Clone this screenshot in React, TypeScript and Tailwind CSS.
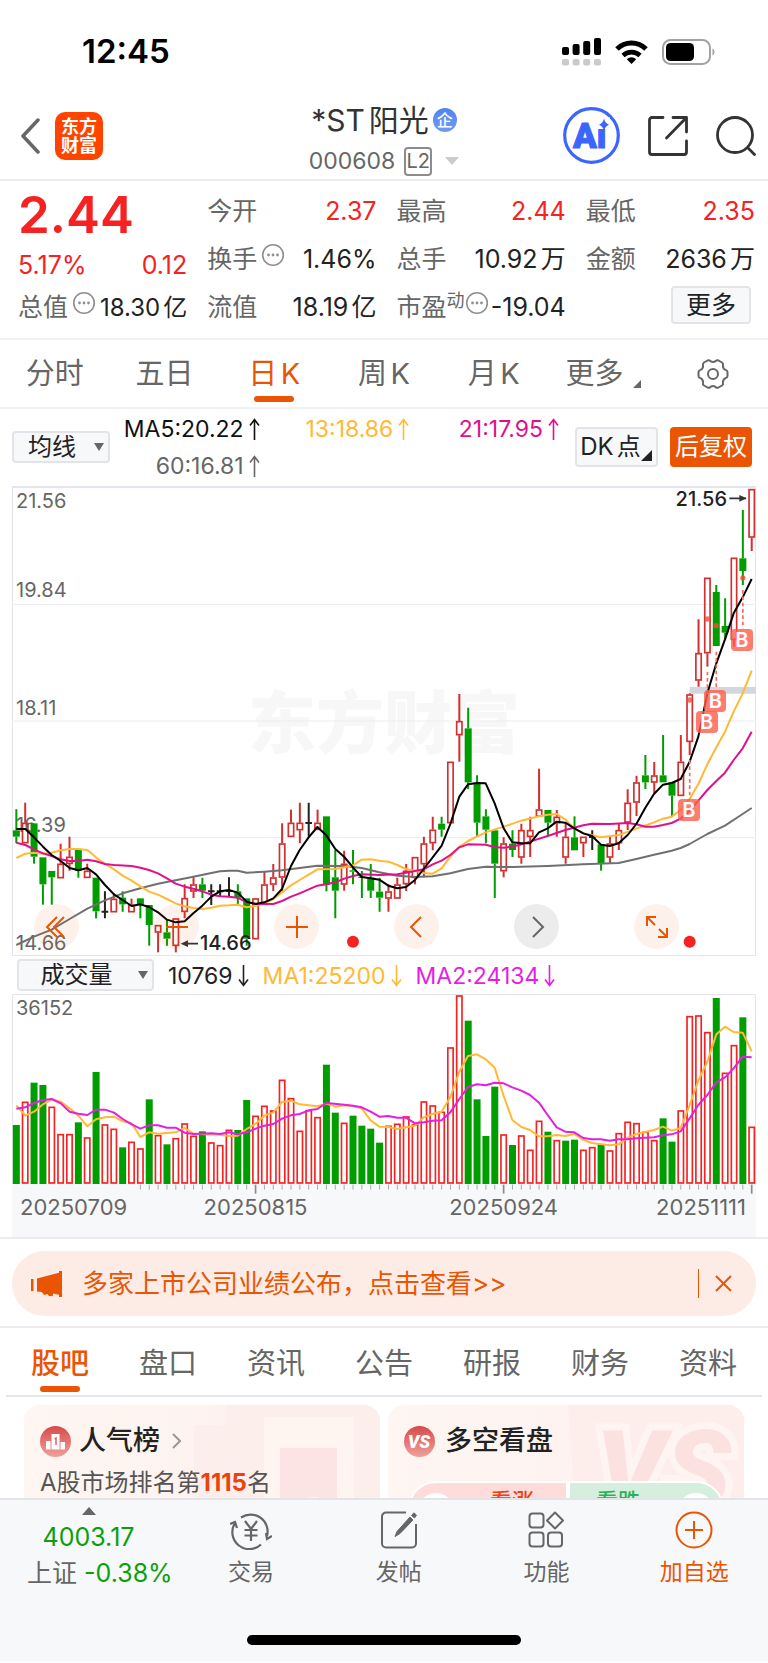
import React, { useState } from 'react';
import clsx from 'clsx';

type Kind = 'up' | 'down' | 'flat';

// kind, high, body top, body bottom, low (chart units, y grows downwards)
type Candle = [Kind, number, number, number, number];

const CHART_LEFT = 36;
const CHART_WIDTH = 2232;
const FIRST_X = 49;
const STEP = 26.58;

const xAt = (index: number) => FIRST_X + index * STEP;
const leftPercent = (x: number) => `${((x - CHART_LEFT) / CHART_WIDTH) * 100}%`;

const COLORS: Record<Kind, string> = {
  up: '#d22f2f',
  down: '#009d00',
  flat: '#222222'
};

const candles: Candle[] = [
  ['down', 988, 1051, 1070, 1089],
  ['up', 968, 1028, 1090, 1090],
  ['down', 1030, 1030, 1130, 1151],
  ['down', 1132, 1132, 1213, 1274],
  ['down', 1173, 1173, 1192, 1274],
  ['up', 1091, 1151, 1195, 1195],
  ['up', 1070, 1130, 1152, 1172],
  ['down', 1110, 1110, 1172, 1193],
  ['up', 1151, 1172, 1194, 1194],
  ['down', 1193, 1193, 1294, 1315],
  ['flat', 1234, 1295, 1295, 1315],
  ['up', 1240, 1256, 1297, 1297],
  ['down', 1234, 1253, 1273, 1295],
  ['up', 1256, 1274, 1297, 1297],
  ['down', 1255, 1255, 1275, 1315],
  ['down', 1275, 1275, 1335, 1397],
  ['up', 1335, 1335, 1358, 1417],
  ['down', 1320, 1357, 1376, 1397],
  ['up', 1315, 1315, 1398, 1417],
  ['up', 1213, 1254, 1296, 1315],
  ['up', 1192, 1213, 1235, 1254],
  ['down', 1193, 1213, 1232, 1254],
  ['flat', 1213, 1234, 1234, 1275],
  ['flat', 1213, 1234, 1234, 1250],
  ['flat', 1192, 1233, 1233, 1250],
  ['down', 1213, 1234, 1253, 1273],
  ['down', 1255, 1255, 1376, 1397],
  ['up', 1255, 1255, 1378, 1378],
  ['up', 1174, 1213, 1275, 1275],
  ['up', 1152, 1192, 1214, 1233],
  ['up', 1030, 1090, 1193, 1233],
  ['up', 989, 1028, 1071, 1071],
  ['up', 968, 1028, 1051, 1090],
  ['flat', 968, 1029, 1029, 1070],
  ['up', 989, 1028, 1050, 1050],
  ['down', 1009, 1009, 1214, 1234],
  ['down', 1110, 1192, 1232, 1315],
  ['up', 1112, 1151, 1214, 1232],
  ['down', 1110, 1171, 1175, 1213],
  ['down', 1173, 1190, 1194, 1254],
  ['down', 1152, 1193, 1232, 1254],
  ['down', 1193, 1235, 1253, 1295],
  ['up', 1213, 1234, 1256, 1295],
  ['up', 1193, 1213, 1256, 1256],
  ['up', 1152, 1172, 1213, 1233],
  ['up', 1131, 1131, 1194, 1213],
  ['up', 1070, 1090, 1153, 1192],
  ['up', 1010, 1049, 1090, 1111],
  ['down', 1010, 1031, 1049, 1070],
  ['up', 845, 845, 1030, 1030],
  ['up', 642, 723, 766, 845],
  ['down', 683, 745, 907, 927],
  ['down', 886, 908, 1028, 1070],
  ['down', 988, 1009, 1049, 1090],
  ['down', 1051, 1051, 1151, 1254],
  ['up', 1072, 1090, 1174, 1192],
  ['down', 1051, 1091, 1110, 1131],
  ['up', 1031, 1050, 1133, 1151],
  ['up', 1010, 1050, 1071, 1131],
  ['up', 866, 988, 1010, 1010],
  ['down', 990, 990, 1028, 1068],
  ['up', 990, 1010, 1030, 1070],
  ['up', 1030, 1070, 1133, 1151],
  ['down', 1009, 1072, 1111, 1111],
  ['up', 1070, 1070, 1090, 1131],
  ['flat', 1051, 1071, 1071, 1110],
  ['down', 1093, 1093, 1151, 1172],
  ['up', 1070, 1090, 1133, 1151],
  ['up', 1031, 1050, 1090, 1110],
  ['up', 928, 968, 1028, 1050],
  ['up', 887, 907, 968, 1008],
  ['down', 825, 886, 907, 927],
  ['up', 846, 886, 908, 940],
  ['down', 765, 886, 907, 907],
  ['down', 907, 907, 947, 1008],
  ['up', 765, 845, 948, 948],
  ['up', 640, 643, 786, 825],
  ['up', 418, 519, 602, 620],
  ['up', 293, 293, 520, 560],
  ['down', 315, 336, 498, 498],
  ['down', 355, 438, 458, 480],
  ['up', 233, 233, 480, 500],
  ['down', 90, 235, 273, 315],
  ['up', 27, 27, 173, 213]
];

const priceLines = [
  {
    color: '#707070',
    points:
      '49,1395 102,1370 155,1349 209,1317 262,1286 315,1261 368,1240 421,1225 474,1211 527,1201 580,1190 634,1179 660,1174 687,1172 713,1172 740,1178 793,1175 846,1171 899,1164 952,1157 1033,1158 1085,1164 1138,1177 1192,1187 1245,1191 1298,1189 1351,1180 1404,1167 1457,1160 1537,1161 1643,1158 1750,1153 1856,1149 1909,1137 1962,1124 2015,1112 2042,1104 2069,1092 2122,1062 2175,1037 2228,1002 2255,984'
  },
  {
    color: '#ffb933',
    points:
      '49,1134 76,1121 102,1118 129,1121 155,1118 182,1111 209,1107 235,1107 262,1110 288,1132 315,1152 342,1168 368,1187 395,1202 421,1219 447,1235 474,1244 501,1257 527,1270 554,1279 580,1284 607,1287 634,1283 660,1277 687,1276 713,1274 740,1282 767,1278 793,1270 820,1257 846,1237 873,1216 899,1200 926,1184 952,1168 1006,1167 1033,1162 1059,1156 1085,1139 1112,1138 1138,1142 1165,1145 1192,1155 1218,1167 1245,1172 1271,1179 1298,1181 1325,1165 1351,1130 1378,1100 1404,1083 1457,1057 1511,1040 1564,1022 1617,1009 1643,1004 1670,1002 1696,1018 1723,1045 1750,1060 1803,1072 1856,1065 1909,1046 1962,1027 1989,1016 2015,1010 2042,990 2069,957 2095,912 2122,853 2149,802 2175,755 2201,695 2228,640 2255,572'
  },
  {
    color: '#e0108c',
    points:
      '49,1088 76,1095 102,1108 129,1120 155,1128 182,1138 209,1143 235,1143 262,1139 288,1144 315,1152 342,1155 395,1158 421,1163 447,1170 474,1180 501,1195 527,1211 554,1220 580,1226 607,1234 634,1244 660,1249 687,1250 713,1253 740,1267 767,1271 820,1272 846,1263 873,1250 899,1240 952,1217 979,1213 1006,1207 1033,1196 1059,1188 1085,1183 1138,1185 1192,1183 1218,1178 1271,1168 1298,1153 1325,1142 1351,1125 1378,1102 1404,1093 1457,1094 1484,1101 1511,1103 1537,1100 1564,1093 1590,1085 1643,1068 1696,1050 1750,1036 1776,1031 1829,1032 1883,1029 1909,1033 1936,1040 1962,1040 1989,1035 2015,1029 2042,1016 2069,992 2095,962 2122,930 2149,903 2175,878 2201,840 2228,805 2255,755'
  },
  {
    color: '#000000',
    points:
      '49,1047 76,1047 102,1072 129,1100 155,1125 182,1143 209,1164 235,1171 262,1164 288,1183 315,1215 342,1243 368,1260 395,1278 421,1273 447,1281 474,1297 501,1319 527,1327 554,1324 580,1300 607,1277 634,1250 660,1234 687,1230 713,1238 740,1265 767,1272 793,1267 820,1255 846,1227 873,1158 899,1110 926,1072 952,1041 979,1066 1006,1107 1033,1131 1059,1162 1085,1191 1112,1195 1138,1199 1165,1217 1192,1225 1218,1221 1245,1200 1271,1167 1298,1132 1325,1097 1351,1032 1378,950 1404,913 1431,909 1457,910 1484,970 1511,1045 1537,1087 1564,1090 1590,1090 1617,1057 1643,1045 1670,1025 1696,1028 1723,1045 1750,1060 1776,1068 1803,1094 1829,1098 1856,1090 1883,1065 1909,1032 1936,983 1962,942 1989,914 2015,909 2042,897 2069,845 2095,770 2122,640 2149,550 2175,478 2201,400 2228,352 2255,297'
  }
];

// top of each volume bar, baseline at 611
const volumeTops = [
  435, 365, 308, 315, 380, 462, 462, 427, 472, 276, 433, 446, 502, 485, 505, 358, 465, 493, 474, 430, 467,
  454, 487, 495, 449, 450, 360, 407, 377, 391, 299, 354, 452, 390, 411, 254, 398, 428, 407, 437, 446, 488,
  437, 431, 409, 433, 364, 376, 395, 202, 46, 122, 358, 468, 320, 463, 495, 466, 509, 422, 455, 480, 482,
  479, 509, 501, 492, 511, 459, 425, 429, 455, 480, 415, 485, 391, 108, 106, 156, 54, 278, 195, 112, 440
];

const volumeDown = new Set([
  0, 2, 3, 7, 9, 12, 15, 17, 21, 25, 26, 35, 36, 38, 39, 40, 41, 51, 52, 53, 54, 56, 60, 62, 63, 66, 73, 74,
  79, 82
]);

const volumeLines = [
  {
    color: '#ffb933',
    points:
      '49,376 76,407 102,395 129,373 155,358 182,365 209,385 235,407 262,439 288,418 315,412 342,410 368,424 395,430 421,471 447,457 474,461 527,457 554,444 580,461 660,464 687,468 713,467 740,447 767,431 793,407 820,397 846,366 873,362 899,373 952,379 979,371 1006,380 1033,376 1059,378 1085,385 1112,421 1138,440 1165,441 1192,447 1218,442 1245,437 1271,412 1298,402 1325,395 1351,351 1378,275 1404,228 1431,223 1457,238 1484,263 1511,348 1537,420 1564,441 1590,450 1617,469 1643,469 1670,465 1696,468 1723,462 1750,480 1776,489 1829,496 1856,493 1883,473 1909,462 1962,450 1989,440 2015,452 2042,444 2069,375 2095,302 2122,245 2149,163 2175,140 2201,156 2228,158 2255,214'
  },
  {
    color: '#e51ee5',
    points:
      '49,386 76,382 102,369 129,360 155,357 182,370 209,395 235,401 262,405 288,389 315,389 342,398 368,417 395,433 421,446 447,436 474,436 501,443 527,443 554,458 580,462 634,460 660,462 687,457 713,463 740,457 767,446 793,437 820,432 846,416 873,406 899,402 926,391 952,387 979,369 1033,374 1059,377 1085,382 1112,395 1138,410 1165,408 1192,413 1218,413 1245,430 1271,427 1298,422 1325,421 1351,397 1378,357 1404,321 1431,313 1457,316 1484,308 1511,310 1537,322 1564,332 1590,345 1617,368 1643,405 1670,442 1696,455 1723,457 1750,474 1776,478 1803,478 1829,482 1856,478 1883,478 1909,475 1962,472 1989,466 2015,463 2042,454 2069,415 2095,375 2122,345 2149,307 2175,292 2201,265 2228,230 2255,232'
  }
];

const priceLabels = [
  { text: '21.56', className: 'top-px' },
  { text: '19.84', className: 'top-[90px]' },
  { text: '18.11', className: 'top-[208px]' },
  { text: '16.39', className: 'top-[325px]' },
  { text: '14.66', className: 'top-[443px]' }
];

const buyMarks = [
  { index: 76, dot: 660, from: 840, to: 955, className: 'top-[311px]' },
  { index: 78, dot: 417, from: 575, to: 660, className: 'top-[223px]' },
  { index: 79, dot: 437, from: 515, to: 625, className: 'top-[202px]' },
  { index: 82, dot: 294, from: 330, to: 445, className: 'top-[141px]' }
];

const periods = ['分时', '五日', '日K', '周K', '月K', '更多'];
const sections = ['股吧', '盘口', '资讯', '公告', '研报', '财务', '资料'];

const InfoDot = () => (
  <svg className="mb-[10px] ml-1 h-6 w-6 shrink-0" viewBox="0 0 24 24" fill="none" aria-hidden="true">
    <circle cx="12" cy="12" r="10.300" stroke="#8f8f8f" strokeWidth="1.600" />
    <circle cx="7.500" cy="12" r="1.400" fill="#8f8f8f" />
    <circle cx="12" cy="12" r="1.400" fill="#8f8f8f" />
    <circle cx="16.500" cy="12" r="1.400" fill="#8f8f8f" />
  </svg>
);

const Arrow: React.FC<{ up?: boolean }> = ({ up }) => (
  <svg
    className="ml-[5px] inline-block h-[22px] w-[11px] align-[-3px]"
    viewBox="0 0 11 22"
    fill="none"
    stroke="currentColor"
    strokeWidth="1.600"
    aria-hidden="true"
  >
    <path d={up ? 'M5.500 22V1.500M1 7.500l4.500-6 4.500 6' : 'M5.500 0v20.500M1 14.500l4.500 6 4.500-6'} />
  </svg>
);

interface StatProps {
  label: string;
  value: string;
  red?: boolean;
  info?: boolean;
  sup?: string;
}

const Stat: React.FC<StatProps> = ({ label, value, red, info, sup }) => (
  <div className="flex h-12 items-center whitespace-nowrap">
    <span className="text-[#666]">{label}</span>
    {sup && <span className="-mr-1 mb-4 text-[18px] text-[#666]">{sup}</span>}
    {info && <InfoDot />}
    <span className={clsx('ml-auto', red ? 'text-[#f62222]' : 'text-[#222]')}>{value}</span>
  </div>
);

const StatusBar = () => (
  <div className="flex h-[90px] items-center justify-between pt-[14px] pr-[52px] pl-[82px]">
    <span className="text-[33px] font-semibold text-black">12:45</span>
    <div className="flex items-center gap-[14px]">
      <svg className="h-10 w-[39px]" viewBox="0 0 39 40" aria-hidden="true">
        <rect x="0" y="15" width="7" height="8" rx="2" />
        <rect x="10.6" y="12" width="7" height="11" rx="2" />
        <rect x="21.2" y="9" width="7" height="14" rx="2" />
        <rect x="32" y="6" width="7" height="17" rx="2" />
        <g fill="#cacaca">
          <rect x="0" y="27" width="7" height="6.5" rx="2" />
          <rect x="10.6" y="27" width="7" height="6.5" rx="2" />
          <rect x="21.2" y="27" width="7" height="6.5" rx="2" />
          <rect x="32" y="27" width="7" height="6.5" rx="2" />
        </g>
      </svg>
      <svg className="h-6 w-[33px]" viewBox="0 0 33 24" fill="none" stroke="#000" aria-hidden="true">
        <path d="M2 9a20.500 20.500 0 0 1 29 0" strokeWidth="5" />
        <path d="M8 15.500a12.500 12.500 0 0 1 17 0" strokeWidth="4.600" />
        <path d="M11.800 19.300a6.600 6.600 0 0 1 9.400 0L16.500 24z" fill="#000" stroke="none" />
      </svg>
      <svg className="h-[26px] w-[54px]" viewBox="0 0 54 26" aria-hidden="true">
        <rect x="1" y="1" width="47" height="24" rx="7.500" fill="none" stroke="#a2a2a2" strokeWidth="2" />
        <rect x="4" y="4" width="28" height="18" rx="4.500" />
        <path d="M50.500 9.500c2.600 1 2.600 6 0 7z" fill="#a2a2a2" />
      </svg>
    </div>
  </div>
);

const Header = () => (
  <header className="grid h-[91px] grid-cols-[1fr_auto_1fr] items-center border-b-2 border-[#ececee] px-3">
    <div className="flex items-center gap-[15px] pl-2">
      <button type="button" aria-label="返回">
        <svg className="h-9 w-5" viewBox="0 0 20 36" fill="none" stroke="#666" strokeWidth="3.500" strokeLinecap="round" strokeLinejoin="round">
          <path d="M18 2L3 18l15 16" />
        </svg>
      </button>
      <div className="flex h-12 w-12 flex-col items-center justify-center rounded-[10px] bg-[#ff4400] text-[18px] leading-[19px] font-bold text-white">
        <span>东方</span>
        <span>财富</span>
      </div>
    </div>
    <div className="flex flex-col items-center pt-[9px]">
      <div className="flex items-center gap-1 text-[30px] leading-[42px] text-[#333]">
        <h1>*ST阳光</h1>
        <span className="flex h-6 w-6 items-center justify-center rounded-full bg-linear-to-b from-[#5083f0] to-[#6f9bf0] text-[16px] leading-none font-medium text-white">
          企
        </span>
      </div>
      <div className="flex items-center gap-[9px] text-[23px] leading-10 text-[#666]">
        <span>000608</span>
        <span className="flex h-[29px] w-7 items-center justify-center rounded border-2 border-[#8c8c8c] text-[20px] leading-none">
          L2
        </span>
        <svg className="ml-1 h-2 w-[14px]" viewBox="0 0 14 8" fill="#ccc" aria-hidden="true">
          <path d="M0 0h14L7 8z" />
        </svg>
      </div>
    </div>
    <div className="flex items-center justify-end gap-7">
      <button type="button" aria-label="Ai">
        <svg className="h-[57px] w-[57px]" viewBox="0 0 57 57">
          <circle cx="28.500" cy="28.500" r="26.800" fill="none" stroke="#3a66ff" strokeWidth="3.200" />
          <text x="10" y="41" className="font-['Roboto']" fontSize="35" fontWeight="900" fill="#3a66ff" stroke="#3a66ff" strokeLinejoin="round">
            Ai
          </text>
          <path d="M34.500 10h12v12h-12z" fill="#fff" />
          <path d="M41 11.500q1.200 5 5 6.200q-3.800 1.300-5 6.200q-1.200-4.900-5-6.200q3.800-1.200 5-6.200z" fill="#3a66ff" />
        </svg>
      </button>
      <button type="button" aria-label="分享">
        <svg className="h-10 w-10" viewBox="0 0 40 40" fill="none" stroke="#333" strokeWidth="2.800" strokeLinecap="round" strokeLinejoin="round">
          <path d="M15 1.500H4a2.500 2.500 0 0 0-2.500 2.500v32a2.500 2.500 0 0 0 2.500 2.500h32a2.500 2.500 0 0 0 2.500-2.500V25" />
          <path d="M25 1.500h13.500V16M38 2L18.500 22" />
        </svg>
      </button>
      <button type="button" aria-label="搜索">
        <svg className="h-10 w-10" viewBox="0 0 40 40" fill="none" stroke="#333" strokeWidth="2.800" strokeLinecap="round">
          <circle cx="19" cy="19" r="17.500" />
          <path d="M32 32l6.500 6.500" />
        </svg>
      </button>
    </div>
  </header>
);

const Quote = () => (
  <section className="grid grid-cols-4 gap-5 border-b-2 border-[#f2f2f4] pt-[7px] pr-[13px] pb-[6px] pl-[18px] text-[25px]">
    <div className="flex flex-col">
      <span className="text-[51px] leading-[54px] font-semibold text-[#f62222]">2.44</span>
      <div className="flex h-12 items-center justify-between text-[#f62222]">
        <span>5.17%</span>
        <span>0.12</span>
      </div>
      <div className="flex h-9 items-center whitespace-nowrap">
        <span className="text-[#666]">总值</span>
        <InfoDot />
        <span className="ml-auto text-[24px] text-[#222]">18.30亿</span>
      </div>
    </div>
    <div>
      <Stat label="今开" value="2.37" red />
      <Stat label="换手" value="1.46%" info />
      <Stat label="流值" value="18.19亿" />
    </div>
    <div>
      <Stat label="最高" value="2.44" red />
      <Stat label="总手" value="10.92万" />
      <Stat label="市盈" value="-19.04" sup="动" info />
    </div>
    <div>
      <Stat label="最低" value="2.35" red />
      <Stat label="金额" value="2636万" />
      <div className="flex h-10 items-center justify-end pt-[2px] pr-1">
        <button type="button" className="h-[38px] w-20 rounded border-2 border-[#e2e4e8] bg-[#f7f8fa] leading-none text-[#222]">
          更多
        </button>
      </div>
    </div>
  </section>
);

const PeriodTabs = () => {
  const [active, setActive] = useState('日K');

  return (
    <nav className="grid h-[69px] grid-cols-7 border-b-2 border-[#f2f2f4]">
      {periods.map((name) => (
        <button
          key={name}
          type="button"
          onClick={() => setActive(name)}
          className={clsx(
            'relative flex items-center justify-center text-[29px]',
            name === active ? 'text-[#ea5504]' : 'text-[#666]'
          )}
        >
          {name}
          {name === '更多' && (
            <svg className="mt-5 ml-[10px] h-2 w-2" viewBox="0 0 8 8" fill="#666" aria-hidden="true">
              <path d="M8 0v8H0z" />
            </svg>
          )}
          {name === active && <span className="absolute bottom-[5px] h-[6px] w-10 rounded-full bg-[#ea5504]" />}
        </button>
      ))}
      <button type="button" aria-label="设置" className="flex items-center justify-center">
        <svg className="h-8 w-8" viewBox="0 0 32 32" fill="none" stroke="#666" strokeWidth="2" strokeLinejoin="round">
          <path d="M10.500 2.500q1.500-.8 3 .6q2.500 1.800 5 0q1.500-1.400 3-.6l3.500 2q1.500 1 1 2.800q-.5 3 2.500 4.600q2 .6 2 2.100v4q0 1.500-2 2.100q-3 1.600-2.500 4.600q.5 1.800-1 2.800l-3.500 2q-1.500.8-3-.6q-2.500-1.800-5 0q-1.500 1.400-3 .6l-3.500-2q-1.500-1-1-2.800q.5-3-2.500-4.600q-2-.6-2-2.100v-4q0-1.500 2-2.100q3-1.600 2.500-4.600q-.5-1.800 1-2.800z" />
          <circle cx="16" cy="16" r="5" />
        </svg>
      </button>
    </nav>
  );
};

interface DropdownProps {
  label: string;
  value: string;
  className: string;
}

const Dropdown: React.FC<DropdownProps> = ({ label, value, className }) => (
  <div className={clsx('relative shrink-0', className)}>
    <select
      aria-label={label}
      className="h-8 w-full appearance-none rounded border-2 border-[#e2e4e8] bg-[#f7f8fa] pr-[18px] text-center text-[24px] leading-none text-[#222]"
    >
      <option>{value}</option>
    </select>
    <svg className="pointer-events-none absolute top-3 right-[6px] h-2 w-[10px]" viewBox="0 0 10 8" fill="#666" aria-hidden="true">
      <path d="M0 0h10L5 8z" />
    </svg>
  </div>
);

const MaBar = () => (
  <div className="flex h-[77px] px-3">
    <Dropdown label="指标" value="均线" className="mt-[22px] w-[98px]" />
    <div className="grid w-[449px] grid-cols-3 content-start pt-[2px] text-right text-[23px] leading-[37px] whitespace-nowrap">
      <span className="text-[#111]">
        MA5:20.22
        <Arrow up />
      </span>
      <span className="text-[#ffb933]">
        13:18.86
        <Arrow up />
      </span>
      <span className="text-[#e0108c]">
        21:17.95
        <Arrow up />
      </span>
      <span className="text-[#666]">
        60:16.81
        <Arrow up />
      </span>
    </div>
    <div className="mt-[18px] ml-auto flex gap-3 pr-1 text-[24px]">
      <button type="button" className="relative h-10 w-[83px] rounded border-2 border-[#e2e4e8] bg-[#f7f8fa] pr-3 leading-none whitespace-nowrap text-[#222]">
        DK点
        <svg className="absolute right-1 bottom-1 h-[11px] w-[11px]" viewBox="0 0 11 11" fill="#222" aria-hidden="true">
          <path d="M11 0v11H0z" />
        </svg>
      </button>
      <button type="button" className="h-10 w-[82px] rounded bg-[#ea5504] leading-none whitespace-nowrap text-white">
        后复权
      </button>
    </div>
  </div>
);

interface RoundButtonProps {
  label: string;
  path: string;
  muted?: boolean;
}

const RoundButton: React.FC<RoundButtonProps> = ({ label, path, muted }) => (
  <button
    type="button"
    aria-label={label}
    className={clsx(
      'flex h-[45px] w-[45px] items-center justify-center rounded-full',
      muted ? 'bg-[#666]/12 text-[#666]' : 'bg-[#ea5504]/8 text-[#ea5504]'
    )}
  >
    <svg className="h-6 w-6" viewBox="0 0 24 24" fill="none" stroke="currentColor" strokeWidth="2">
      <path d={path} />
    </svg>
  </button>
);

const PriceChart = () => (
  <div className="relative h-[470px] border border-t-2 border-[#e4e5ec]">
    <span className="absolute inset-x-0 top-[201px] text-center text-[68px] leading-none font-black text-[#f7f7f7]">
      东方财富
    </span>
    {priceLabels.map((label) => (
      <span key={label.text} className={clsx('absolute left-[3px] text-[20px] leading-6 text-[#666]', label.className)}>
        {label.text}
      </span>
    ))}
    <svg
      className="absolute -top-[2px] -left-px h-[470px] w-[calc(100%+2px)]"
      viewBox="36 18 2232 1410"
      preserveAspectRatio="none"
      fill="none"
      aria-hidden="true"
    >
      {[373, 723, 1073].map((y) => (
        <path key={y} d={`M36 ${y}H2268`} stroke="#e9edf4" strokeWidth="3" />
      ))}
      <path d="M2069 631H2268" stroke="#d3d6dc" strokeWidth="20" />
      {candles.map(([kind, high, top, bottom, low], i) => {
        const x = xAt(i);
        const color = COLORS[kind];
        if (kind === 'flat') {
          return <path key={i} d={`M${x} ${high}V${low}M${x - 10} ${top}H${x + 10}`} stroke={color} strokeWidth="6" />;
        }
        return (
          <g key={i} stroke={color} strokeWidth="6">
            <path d={`M${x} ${high}V${top}M${x} ${bottom}V${low}`} />
            {kind === 'down' ? (
              <rect x={x - 10.5} y={top} width="21" height={bottom - top} fill={color} stroke="none" />
            ) : (
              <rect x={x - 8} y={top + 2} width="16" height={bottom - top - 4} strokeWidth="5" />
            )}
          </g>
        );
      })}
      {priceLines.map((line) => (
        <polyline key={line.color} points={line.points} stroke={line.color} strokeWidth="6" strokeLinejoin="round" />
      ))}
      {buyMarks.map((mark) => (
        <g key={mark.index}>
          <circle cx={xAt(mark.index)} cy={mark.dot} r="8" fill="#f0502f" fillOpacity="0.8" />
          <path d={`M${xAt(mark.index)} ${mark.from}V${mark.to}`} stroke="#f96a58" strokeWidth="5" strokeDasharray="11 8" />
        </g>
      ))}
      <circle cx="1059" cy="1385" r="18" fill="#f62222" />
      <circle cx="2069" cy="1385" r="18" fill="#f62222" />
      <path d="M594 1391H550M2188 55H2238" stroke="#333" strokeWidth="5" />
      <path d="M542 1391l22-10v20zM2240 55l-22-10v20z" fill="#333" />
    </svg>
    <span className="absolute top-[443px] left-[187px] text-[20px] leading-6 font-medium text-[#222]">14.66</span>
    <span className="absolute -top-px right-[28px] text-[20px] leading-6 font-medium text-[#222]">21.56</span>
    {buyMarks.map((mark) => (
      <span
        key={mark.index}
        className={clsx(
          'absolute flex h-[22px] w-[22px] -translate-x-1/2 items-center justify-center rounded bg-[#ff5c4a]/80 text-[20px] leading-none font-semibold text-white',
          mark.className
        )}
        style={{ left: leftPercent(xAt(mark.index)) }}
      >
        B
      </span>
    ))}
    <div className="absolute inset-x-0 bottom-[6px] flex justify-between pr-[76px] pl-[21px]">
      <RoundButton label="最早" path="M12 2L2 12l10 10M19 2L9 12l10 10" />
      <RoundButton label="缩小" path="M1 12h22" />
      <RoundButton label="放大" path="M1 12h22M12 1v22" />
      <RoundButton label="向左" path="M16 2L6 12l10 10" />
      <RoundButton label="向右" path="M8 2l10 10L8 22" muted />
      <RoundButton label="全屏" path="M2 11V2h9M2 2l8 8M13 22h9v-9M22 22l-8-8" />
    </div>
  </div>
);

const VolumeChart = () => (
  <>
    <div className="relative h-[190px] border border-b-0 border-[#e4e5ec]">
      <span className="absolute top-px left-[3px] text-[20px] leading-6 text-[#666]">36152</span>
      <svg
        className="absolute -inset-px h-[190px] w-[calc(100%+2px)]"
        viewBox="36 42 2232 570"
        preserveAspectRatio="none"
        fill="none"
        aria-hidden="true"
      >
        {volumeTops.map((top, i) =>
          volumeDown.has(i) ? (
            <rect key={i} x={xAt(i) - 10.5} y={top} width="21" height={612 - top} fill="#009d00" />
          ) : (
            <rect key={i} x={xAt(i) - 8} y={top + 2} width="16" height={607 - top} stroke="#f62222" strokeWidth="5" />
          )
        )}
        {volumeLines.map((line) => (
          <polyline key={line.color} points={line.points} stroke={line.color} strokeWidth="6" strokeLinejoin="round" />
        ))}
      </svg>
    </div>
    <div className="relative h-[53px] bg-[#f7f8fa] text-[22px] leading-none text-[#666]">
      <svg className="absolute inset-x-0 top-0 h-[10px] w-full" viewBox="36 0 2232 30" preserveAspectRatio="none" aria-hidden="true">
        {volumeTops.map((_, i) =>
          i < 14 ? null : (
            <path
              key={i}
              d={`M${xAt(i)} 2V${(i - 27) % 28 === 0 ? 29 : 17}`}
              stroke={(i - 27) % 28 === 0 ? '#8a8a8a' : '#aaaaaa'}
              strokeWidth={(i - 27) % 28 === 0 ? 5 : 3}
            />
          )
        )}
      </svg>
      <span className="absolute top-3 left-2">20250709</span>
      <span className="absolute top-3 -translate-x-1/2" style={{ left: leftPercent(xAt(27)) }}>
        20250815
      </span>
      <span className="absolute top-3 -translate-x-1/2" style={{ left: leftPercent(xAt(55)) }}>
        20250924
      </span>
      <span className="absolute top-3 right-[10px]">20251111</span>
    </div>
  </>
);

const Banner = () => (
  <div className="border-y-2 border-[#ebebf0] px-3 pt-3 pb-[10px]">
    <div className="flex h-[65px] items-center rounded-full bg-[#fdece5] pr-6 pl-[19px] text-[26px] text-[#ea5504]">
      <svg className="h-[26px] w-[31px] shrink-0" viewBox="0 0 31 26" fill="currentColor" aria-hidden="true">
        <path d="M0 8h2.500v12H0z" />
        <path d="M6 7.500L29 1.500v22.500L22 22.500V24q0 1.500-2 1h-2l-1.500-2-3 1-3-3L6 20.500z" />
        <path d="M28 0h3v26h-3z" />
      </svg>
      <a href="#report" className="ml-5">
        多家上市公司业绩公布，点击查看&gt;&gt;
      </a>
      <button type="button" aria-label="关闭" className="ml-auto flex items-center border-l border-[#ea5504] py-[6px] pl-4">
        <svg className="h-[17px] w-[17px]" viewBox="0 0 17 17" stroke="currentColor" strokeWidth="2">
          <path d="M1 1l15 15M16 1L1 16" />
        </svg>
      </button>
    </div>
  </div>
);

const SectionTabs = () => {
  const [active, setActive] = useState('股吧');

  return (
    <nav className="mx-[6px] grid h-[69px] grid-cols-7 border-b-2 border-[#e6e7ee]">
      {sections.map((name) => (
        <button
          key={name}
          type="button"
          onClick={() => setActive(name)}
          className={clsx(
            'relative flex items-center justify-center pt-1 text-[29px]',
            name === active ? 'font-medium text-[#ea5504]' : 'text-[#666]'
          )}
        >
          {name}
          {name === active && <span className="absolute bottom-[3px] h-[6px] w-10 rounded-full bg-[#ea5504]" />}
        </button>
      ))}
    </nav>
  );
};

const Cards = () => (
  <section className="grid h-[101px] grid-cols-2 gap-2 overflow-hidden px-6 pt-2">
    <div className="relative h-[140px] overflow-hidden rounded-2xl bg-linear-to-r from-[#fef6f2] to-[#fdefed] px-4 pt-5">
      <svg className="absolute top-0 right-0 h-[140px] w-[190px]" viewBox="0 0 190 140" aria-hidden="true">
        <path d="M4 20h32V0h154v140H4z" fill="#fceeeb" />
        <path d="M74 12h90v128H74z" fill="#fef4f0" />
        <path d="M90 43h57v97H90z" fill="#fbe4e3" />
        <path d="M54 96h26v44H54zM156 96h14v44h-14z" fill="#fbe7e5" />
        <path d="M106 102l14-10h8v48h-12v-36l-10 5z" fill="#fef2ef" />
      </svg>
      <div className="relative flex h-8 items-center text-[27px] font-medium text-[#222]">
        <svg className="h-[31px] w-[31px]" viewBox="0 0 31 31" aria-hidden="true">
          <defs>
            <linearGradient id="badge" x1="0" y1="0" x2="0" y2="1">
              <stop offset="0" stopColor="#d74a4a" />
              <stop offset="1" stopColor="#f0a09a" />
            </linearGradient>
          </defs>
          <circle cx="15.500" cy="15.500" r="15.500" fill="url(#badge)" />
          <path d="M6 15h4.500v8.500H6zM20.500 16H25v7.500h-4.500z" fill="#fff" />
          <path d="M11.500 8h8v15.500h-8z" fill="#fff" />
          <path d="M14.500 13l1.500-1v7" fill="none" stroke="#dd6460" strokeWidth="1.500" />
        </svg>
        <h2 className="ml-2">人气榜</h2>
        <svg className="ml-3 h-4 w-[9px]" viewBox="0 0 9 16" fill="none" stroke="#999" strokeWidth="2" aria-hidden="true">
          <path d="M1 1l7 7-7 7" />
        </svg>
      </div>
      <p className="relative mt-[10px] text-[24px] leading-8 text-[#555] [text-autospace:no-autospace]">
        A股市场排名第<b className="font-bold text-[#ea4310]">1115</b>名
      </p>
    </div>
    <div className="relative h-[140px] overflow-hidden rounded-2xl bg-linear-to-r from-[#fef6f2] to-[#fdefed] px-4 pt-5">
      <svg className="absolute top-0 right-0 h-[140px] w-[176px] font-['Roboto']" viewBox="0 0 176 140" aria-hidden="true">
        <path d="M0 0h176v140H10z" fill="#fdeeec" />
        <text x="28" y="102" fontSize="108" fontWeight="900" fontStyle="italic" fill="#fbe2e1" stroke="#fef4f1" strokeWidth="14" paintOrder="stroke">
          VS
        </text>
      </svg>
      <div className="relative flex h-8 items-center text-[27px] font-medium text-[#222]">
        <svg className="h-[31px] w-[31px] font-['Roboto']" viewBox="0 0 31 31" aria-hidden="true">
          <circle cx="15.500" cy="15.500" r="15.500" fill="url(#badge)" />
          <text x="15" y="22" textAnchor="middle" fontSize="18" fontWeight="900" fontStyle="italic" fill="#fff">
            VS
          </text>
        </svg>
        <h2 className="ml-[10px]">多空看盘</h2>
      </div>
      <div className="relative mt-6 ml-1 flex h-14 w-[316px] overflow-hidden rounded-full border-2 border-white bg-[#ffdcda] text-[22px] leading-9 font-medium">
        <span className="absolute top-[10px] left-2 h-9 w-9 rounded-full bg-white" />
        <span className="w-1/2 pl-12 text-center text-[#ea4310]">看涨</span>
        <span className="w-1/2 border-l-4 border-white bg-[#d5eedd] pr-14 text-center text-[#2fae5b]">看跌</span>
        <span className="absolute top-[10px] right-2 h-9 w-9 rounded-full bg-white" />
      </div>
    </div>
  </section>
);

interface NavItemProps {
  label: string;
  accent?: boolean;
  children: React.ReactNode;
}

const NavItem: React.FC<NavItemProps> = ({ label, accent, children }) => (
  <a
    href="#nav"
    className={clsx('flex flex-col items-center gap-1 text-[23px] leading-9', accent ? 'text-[#ea5504]' : 'text-[#666]')}
  >
    <svg className="h-10 w-[42px]" viewBox="0 0 42 40" fill="none" stroke="currentColor" strokeWidth="2">
      {children}
    </svg>
    {label}
  </a>
);

const BottomNav = () => (
  <footer className="border-t-2 border-[#e3e4e8] bg-[#f7f8fa] pb-[17px]">
    <div className="grid grid-cols-[177px_1fr_1fr_1fr_1fr] pt-[10px]">
      <div className="relative flex flex-col items-center pt-[9px] text-[25px] leading-9 text-[#0aa00a]">
        <svg className="absolute -top-[3px] h-2 w-[14px]" viewBox="0 0 14 8" fill="#666" aria-hidden="true">
          <path d="M7 0l7 8H0z" />
        </svg>
        <span>4003.17</span>
        <span className="self-start pl-[27px] whitespace-nowrap">
          <span className="text-[#666]">上证</span> -0.38%
        </span>
      </div>
      <NavItem label="交易">
        <path d="M11 7.500A17 17 0 0 1 37 26M31 34.500A17 17 0 0 1 5 13" strokeWidth="2.200" />
        <path d="M0 14l5-2 2 6M42 26l-5 3-1-6" strokeWidth="2.200" />
        <path d="M15 11l6 8 6-8M21 19v12M14.500 20h13M14.500 25.500h13" strokeWidth="2.200" />
      </NavItem>
      <NavItem label="发帖">
        <path d="M28 2.500H8A4 4 0 0 0 4 6.500v27a4 4 0 0 0 4 4h26a4 4 0 0 0 4-4V14" />
        <path d="M17 26.500l2-5L32 7l3 3L22 23.500zM33.500 5.500L36 2.800l2.500 2.500L36.500 8z" fill="currentColor" stroke="currentColor" strokeWidth="1" />
      </NavItem>
      <NavItem label="功能">
        <rect x="4.500" y="3.500" width="14" height="14" rx="3" />
        <rect x="4.500" y="22.500" width="14" height="14" rx="3" />
        <rect x="23" y="22.500" width="14" height="14" rx="3" />
        <path d="M30 2.500l8 8-8 8-8-8z" strokeLinejoin="round" />
      </NavItem>
      <NavItem label="加自选" accent>
        <circle cx="21" cy="20" r="17.500" />
        <path d="M21 11v18M12 20h18" />
      </NavItem>
    </div>
    <div className="mx-auto mt-11 h-[10px] w-[274px] rounded-full bg-black" />
  </footer>
);

const App: React.FC = () => (
  <div className="w-full overflow-hidden bg-white font-['Inter','Noto_Sans_CJK_SC',sans-serif] [text-autospace:normal]">
    <StatusBar />
    <Header />
    <Quote />
    <PeriodTabs />
    <MaBar />
    <main className="px-3">
      <PriceChart />
      <div className="flex h-[38px] items-center gap-[14px] pl-[5px] text-[23px] leading-8 whitespace-nowrap">
        <Dropdown label="副图" value="成交量" className="w-[137px]" />
        <span className="pt-[2px] text-[#222]">
          10769
          <Arrow />
        </span>
        <span className="pt-[2px] text-[#ffb933]">
          MA1:25200
          <Arrow />
        </span>
        <span className="pt-[2px] text-[#e51ee5]">
          MA2:24134
          <Arrow />
        </span>
      </div>
      <VolumeChart />
    </main>
    <Banner />
    <SectionTabs />
    <Cards />
    <BottomNav />
  </div>
);

export default App;
